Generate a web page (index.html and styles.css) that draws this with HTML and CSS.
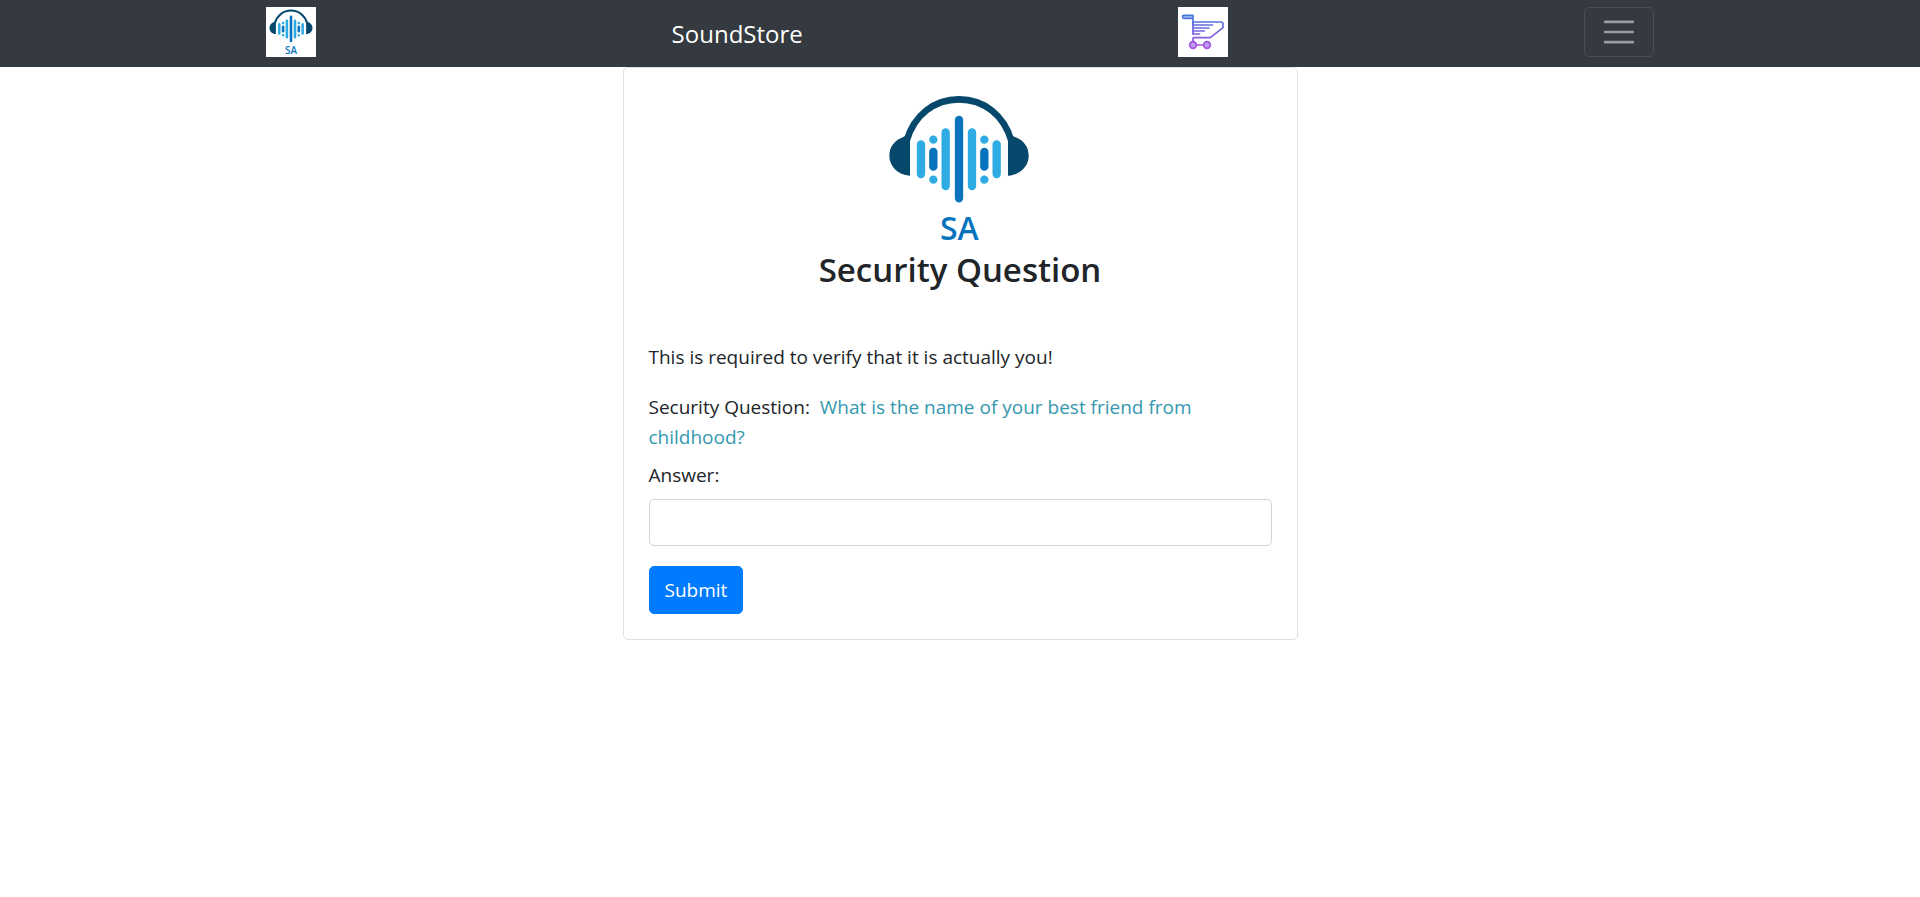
FILE: index.html
```html
<!DOCTYPE html>
<html lang="en">
<head>
<meta charset="utf-8">
<meta name="viewport" content="width=device-width, initial-scale=1">
<title>SoundStore</title>
<link rel="stylesheet" href="styles.css">
</head>
<body>
<svg class="sprite" aria-hidden="true">
  <symbol id="headphones" overflow="visible">
    <path d="M110 182C132 106 192 58 267 58s135 48 157 124" fill="none" stroke="#05486b" stroke-width="20"/>
    <path d="M120 287C82 284 58 258 58 227c0-28 17-47 43-57l19-9zM414 287c38-3 62-29 62-60 0-28-17-47-43-57l-19-9z" fill="#05486b"/>
    <g fill="none" stroke="#2dabe2" stroke-width="25" stroke-linecap="round">
      <path d="M153 193v89M227 157v161M306 157v161M380 193v89M190 179v0M190 299v0M343 179v0M343 299v0"/>
      <path d="M267 120v235M190 216v44M343 216v44" stroke="#0873bd"/>
    </g>
  </symbol>
</svg>
<header class="navbar">
  <nav class="container" aria-label="Main">
    <a class="tile" href="#" aria-label="Home">
      <svg class="tile-icon" viewBox="24 24 486 486"><use href="#headphones"/><text class="logo-text" x="268" y="479" text-anchor="middle">SA</text></svg>
    </a>
    <a class="brand" href="#">SoundStore</a>
    <a class="tile" href="#" aria-label="Cart">
      <svg class="tile-icon" viewBox="51 21 150 150">
        <defs>
          <linearGradient id="cart" gradientUnits="userSpaceOnUse" x1="0" y1="45" x2="0" y2="147">
            <stop offset="0" stop-color="#4577dc"/>
            <stop offset="0.5" stop-color="#7864dc"/>
            <stop offset="1" stop-color="#b04be2"/>
          </linearGradient>
        </defs>
        <g fill="none" stroke="url(#cart)" stroke-width="5" stroke-linejoin="round" stroke-linecap="round">
          <path d="M96 74V46H69a4 4 0 0 0 0 9h27" fill="#a9c6f8"/>
          <path d="M96 66h86l4 4v13l-38 30H98l-2 2v11M96 66v36"/>
          <path d="M96 75h59M96 84h48M96 93h34M96 102h20M107 135h20"/>
          <circle cx="96" cy="135" r="10" fill="#bd9cf3"/>
          <circle cx="138" cy="135" r="10" fill="#bd9cf3"/>
        </g>
      </svg>
    </a>
    <button class="toggler" type="button" aria-label="Toggle navigation">
      <svg class="toggler-icon" viewBox="0 0 30 30"><path d="M4 7h22M4 15h22M4 23h22" stroke="#9a9c9f" stroke-width="2" stroke-linecap="round"/></svg>
    </button>
  </nav>
</header>
<main class="card">
  <svg class="logo" viewBox="45 39 450 450" role="img" aria-label="SA logo"><use href="#headphones"/><text class="logo-text" x="268" y="479" text-anchor="middle">SA</text></svg>
  <h1 class="title">Security Question</h1>
  <p class="note">This is required to verify that it is actually you!</p>
  <form class="form">
    <p class="question">Security Question: &nbsp;<span class="question-text">What is the name of your best friend from childhood?</span></p>
    <label class="label" for="answer">Answer:</label>
    <input class="field" id="answer" type="text">
    <button class="submit" type="submit">Submit</button>
  </form>
</main>
</body>
</html>
```

FILE: styles.css
```css
* { box-sizing: border-box; }

body {
  margin: 0;
  background: #fff;
  color: #212529;
  font-family: "Segoe UI", "Open Sans", "Noto Sans", sans-serif;
  font-size: 19px;
  line-height: 30px;
}

.sprite { position: absolute; width: 0; height: 0; }

.logo-text {
  font-family: "Open Sans", sans-serif;
  font-size: 96px;
  font-weight: 600;
  fill: #0873bd;
}

.navbar { background: #343a40; padding: 7px 20px 10px; }

.container {
  display: flex;
  align-items: center;
  justify-content: space-between;
  max-width: 1388px;
  margin: 0 auto;
}

.tile { display: block; width: 50px; height: 50px; background: #fff; }
.tile-icon { display: block; width: 100%; height: 100%; }

.brand {
  margin-right: 20px;
  padding-top: 3px;
  color: #fff;
  font-size: 24px;
  text-decoration: none;
}

.toggler {
  display: flex;
  align-items: center;
  justify-content: center;
  width: 70px;
  height: 50px;
  padding: 0;
  background: transparent;
  border: 1px solid #484e53;
  border-radius: 5px;
}
.toggler-icon { width: 38px; height: 38px; }

.card {
  display: flex;
  flex-direction: column;
  max-width: 675px;
  margin: 0 auto;
  padding: 25px;
  border: 1px solid #dfdfdf;
  border-radius: 5px;
}

.logo { width: 150px; height: 150px; align-self: center; }

.title {
  margin: 3px 0 48px;
  font-size: 33px;
  font-weight: 600;
  line-height: 48px;
  text-align: center;
}

.note { margin: 0 0 20px; }

.form { display: flex; flex-direction: column; align-items: flex-start; }
.question { margin: 0 0 8px; }
.question-text { color: #3598af; }
.label { margin-bottom: 9px; }

.field {
  width: 100%;
  height: 47px;
  margin-bottom: 20px;
  padding: 8px 15px;
  border: 1px solid #ced4da;
  border-radius: 5px;
  font: inherit;
  color: inherit;
}

.submit {
  padding: 8px 15px;
  border: 1px solid #007bff;
  border-radius: 5px;
  background: #007bff;
  color: #fff;
  font: inherit;
}
```
